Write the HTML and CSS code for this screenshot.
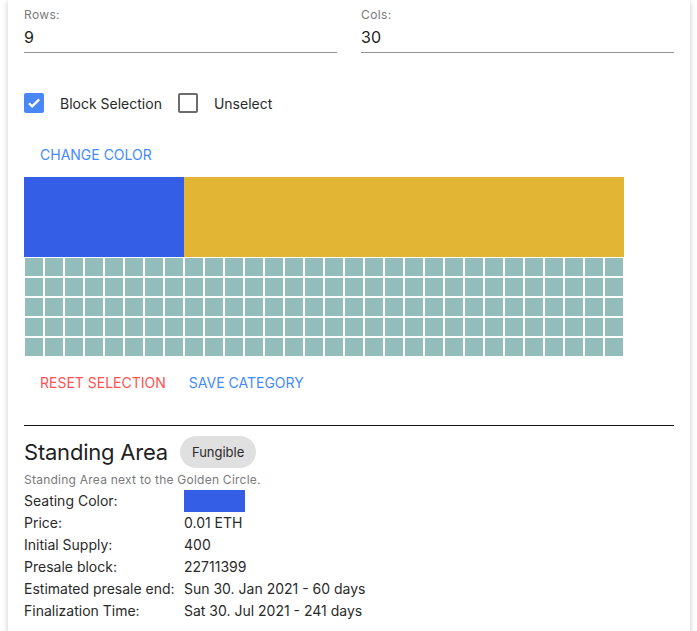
FILE: index.html
```html
<!DOCTYPE html>
<html lang="en">
<head>
<meta charset="utf-8">
<title>Seat category</title>
<link rel="stylesheet" href="styles.css">
</head>
<body>
<div class="card">
  <div class="fields">
    <div class="field">
      <div class="field-label">Rows:</div>
      <div class="field-value">9</div>
    </div>
    <div class="field">
      <div class="field-label">Cols:</div>
      <div class="field-value">30</div>
    </div>
  </div>

  <div class="checks">
    <label class="check">
      <span class="box box-on"><svg viewBox="0 0 20 20" width="20" height="20"><path d="M5 10.2l3.2 3.2L15.2 6.4" fill="none" stroke="#fff" stroke-width="2.2"/></svg></span>
      <span class="check-text">Block Selection</span>
    </label>
    <label class="check">
      <span class="box"></span>
      <span class="check-text">Unselect</span>
    </label>
  </div>

  <div class="actions actions-top">
    <button class="btn btn-primary">Change Color</button>
  </div>

  <div class="seatmap">
    <div class="block block-blue"></div>
    <div class="block block-gold"></div>
    <i class="c"></i><i class="c"></i><i class="c"></i><i class="c"></i><i class="c"></i><i class="c"></i><i class="c"></i><i class="c"></i><i class="c"></i><i class="c"></i><i class="c"></i><i class="c"></i><i class="c"></i><i class="c"></i><i class="c"></i><i class="c"></i><i class="c"></i><i class="c"></i><i class="c"></i><i class="c"></i><i class="c"></i><i class="c"></i><i class="c"></i><i class="c"></i><i class="c"></i><i class="c"></i><i class="c"></i><i class="c"></i><i class="c"></i><i class="c"></i>
    <i class="c"></i><i class="c"></i><i class="c"></i><i class="c"></i><i class="c"></i><i class="c"></i><i class="c"></i><i class="c"></i><i class="c"></i><i class="c"></i><i class="c"></i><i class="c"></i><i class="c"></i><i class="c"></i><i class="c"></i><i class="c"></i><i class="c"></i><i class="c"></i><i class="c"></i><i class="c"></i><i class="c"></i><i class="c"></i><i class="c"></i><i class="c"></i><i class="c"></i><i class="c"></i><i class="c"></i><i class="c"></i><i class="c"></i><i class="c"></i>
    <i class="c"></i><i class="c"></i><i class="c"></i><i class="c"></i><i class="c"></i><i class="c"></i><i class="c"></i><i class="c"></i><i class="c"></i><i class="c"></i><i class="c"></i><i class="c"></i><i class="c"></i><i class="c"></i><i class="c"></i><i class="c"></i><i class="c"></i><i class="c"></i><i class="c"></i><i class="c"></i><i class="c"></i><i class="c"></i><i class="c"></i><i class="c"></i><i class="c"></i><i class="c"></i><i class="c"></i><i class="c"></i><i class="c"></i><i class="c"></i>
    <i class="c"></i><i class="c"></i><i class="c"></i><i class="c"></i><i class="c"></i><i class="c"></i><i class="c"></i><i class="c"></i><i class="c"></i><i class="c"></i><i class="c"></i><i class="c"></i><i class="c"></i><i class="c"></i><i class="c"></i><i class="c"></i><i class="c"></i><i class="c"></i><i class="c"></i><i class="c"></i><i class="c"></i><i class="c"></i><i class="c"></i><i class="c"></i><i class="c"></i><i class="c"></i><i class="c"></i><i class="c"></i><i class="c"></i><i class="c"></i>
    <i class="c"></i><i class="c"></i><i class="c"></i><i class="c"></i><i class="c"></i><i class="c"></i><i class="c"></i><i class="c"></i><i class="c"></i><i class="c"></i><i class="c"></i><i class="c"></i><i class="c"></i><i class="c"></i><i class="c"></i><i class="c"></i><i class="c"></i><i class="c"></i><i class="c"></i><i class="c"></i><i class="c"></i><i class="c"></i><i class="c"></i><i class="c"></i><i class="c"></i><i class="c"></i><i class="c"></i><i class="c"></i><i class="c"></i><i class="c"></i>
  </div>

  <div class="actions actions-bottom">
    <button class="btn btn-danger">Reset Selection</button>
    <button class="btn btn-primary btn-save">Save Category</button>
  </div>

  <hr class="divider">

  <div class="category">
    <div class="cat-head">
      <h2 class="cat-title">Standing Area</h2>
      <span class="chip">Fungible</span>
    </div>
    <p class="cat-desc">Standing Area next to the Golden Circle.</p>
    <div class="info">
      <div class="info-k">Seating Color:</div><div class="info-v"><span class="swatch"></span></div>
      <div class="info-k">Price:</div><div class="info-v">0.01 ETH</div>
      <div class="info-k">Initial Supply:</div><div class="info-v">400</div>
      <div class="info-k">Presale block:</div><div class="info-v">22711399</div>
      <div class="info-k">Estimated presale end:</div><div class="info-v">Sun 30. Jan 2021 - 60 days</div>
      <div class="info-k">Finalization Time:</div><div class="info-v">Sat 30. Jul 2021 - 241 days</div>
    </div>
  </div>
</div>
</body>
</html>
```

FILE: styles.css
```css
* { box-sizing: border-box; }

html, body {
  margin: 0;
  padding: 0;
  background: #fff;
  font-family: Inter, "Noto Sans", sans-serif;
  color: rgba(0, 0, 0, 0.87);
}

.card {
  margin-left: 8px;
  width: 682px;
  min-height: 640px;
  padding: 7px 16px 0 16px;
  background: #fff;
  box-shadow: 0 2px 6px rgba(0, 0, 0, 0.22);
}

.fields {
  display: grid;
  grid-template-columns: 1fr 1fr;
  column-gap: 24px;
}

.field {
  border-bottom: 1px solid #949494;
}

.field-label {
  font-size: 12px;
  line-height: 16px;
  letter-spacing: 0.03em;
  color: #7a7a7a;
}

.field-value {
  margin-top: 2px;
  padding-bottom: 3px;
  font-size: 16px;
  line-height: 24px;
  color: #222;
}

.checks {
  display: flex;
  align-items: center;
  margin-top: 40px;
  height: 20px;
}

.check {
  display: flex;
  align-items: center;
  margin-right: 16px;
}

.box {
  width: 20px;
  height: 20px;
  border: 2px solid #6b6b6b;
  border-radius: 2px;
  display: flex;
  align-items: center;
  justify-content: center;
}

.box-on {
  border: 0;
  background: #4a87f6;
}

.check-text {
  margin-left: 16px;
  font-size: 14px;
  color: #2a2a2a;
}

.actions {
  display: flex;
}

.actions-top {
  margin-top: 23px;
}

.actions-bottom {
  margin-top: 7px;
}

.btn {
  height: 36px;
  padding: 0 16px;
  border: 0;
  background: transparent;
  font-family: inherit;
  font-size: 14px;
  font-weight: 400;
  letter-spacing: 0;
  text-transform: uppercase;
  cursor: pointer;
}

.btn-primary { color: #448aff; }
.btn-danger { color: #ff5252; }
.btn-save { margin-left: -9px; }

.seatmap {
  margin-top: 5px;
  display: grid;
  grid-template-columns: repeat(30, 20px);
  grid-auto-rows: 20px;
  width: 600px;
}

.block-blue {
  grid-column: 1 / 9;
  grid-row: 1 / 5;
  background: #355ee6;
}

.block-gold {
  grid-column: 9 / 31;
  grid-row: 1 / 5;
  background: #e3b535;
}

.c {
  display: block;
  border: 1px solid #fff;
  background: #93bdba;
}

.divider {
  margin: 25px 0 0 0;
  border: 0;
  border-top: 1px solid #111;
}

.category {
  padding-top: 10px;
}

.cat-head {
  display: flex;
  align-items: center;
  height: 32px;
}

.cat-title {
  margin: 0;
  font-size: 22px;
  line-height: 32px;
  font-weight: 400;
  letter-spacing: -0.01em;
  color: #1f1f1f;
}

.chip {
  margin-left: 12px;
  height: 32px;
  padding: 0 12px;
  border-radius: 16px;
  background: #e0e0e0;
  font-size: 13px;
  line-height: 32px;
  color: #2a2a2a;
}

.cat-desc {
  margin: 4px 0 0 0;
  font-size: 12px;
  line-height: 16px;
  letter-spacing: 0.02em;
  color: #7a7a7a;
}

.info {
  margin-top: 2px;
  display: grid;
  grid-template-columns: 160px 1fr;
  grid-auto-rows: 22px;
  font-size: 14px;
  line-height: 22px;
  color: #2a2a2a;
}

.swatch {
  display: block;
  width: 61px;
  height: 22px;
  background: #355ee6;
}
```
